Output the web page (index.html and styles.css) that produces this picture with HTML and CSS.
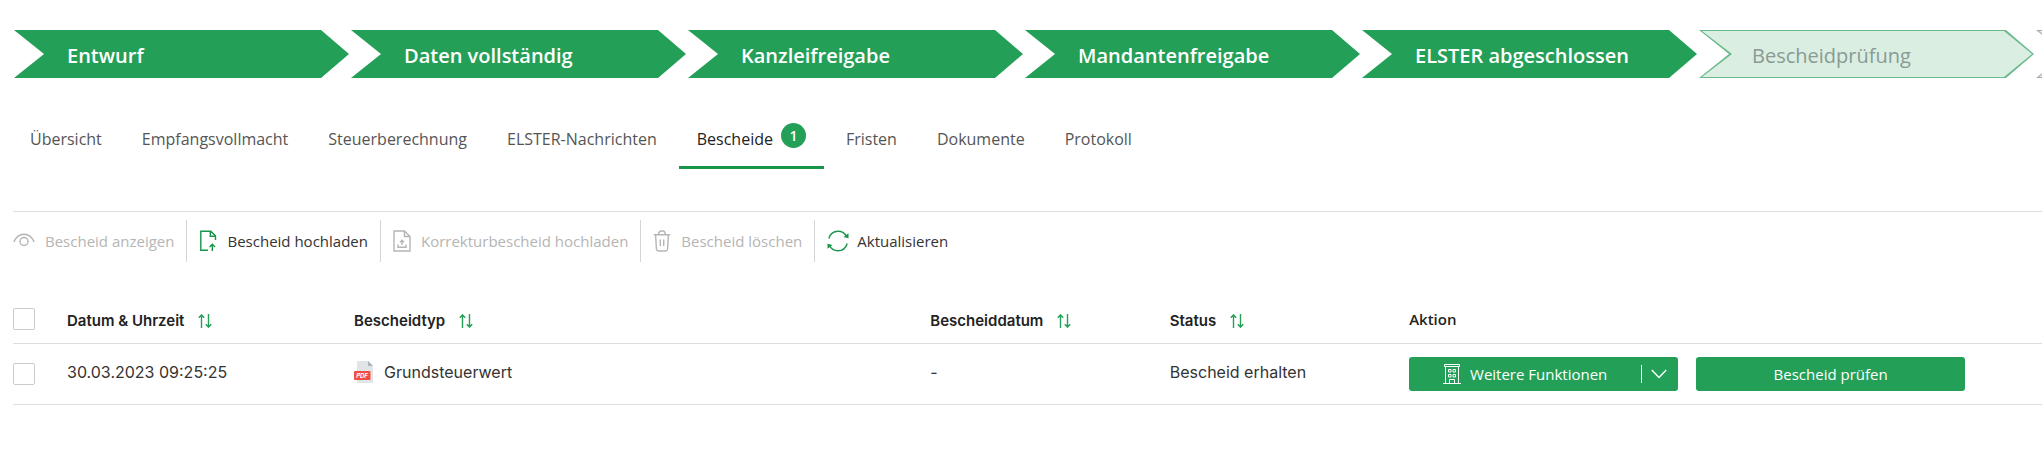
FILE: index.html
```html
<!DOCTYPE html>
<html lang="de">
<head>
  <meta charset="UTF-8" />
  <meta name="viewport" content="width=device-width, initial-scale=1.0"/>
  <title>Bescheide</title>
  <link rel="stylesheet" href="styles.css">
</head>
<body>

  <!-- Icons used more than once -->
  <svg class="icon-defs" aria-hidden="true">
    <symbol id="icon-sort" viewBox="0 0 14 14">
      <path d="M3.5 14V1M.8 3.8l2.7-2.9 2.7 2.9M10.5 0v13M7.8 10.2l2.7 2.9 2.7-2.9" fill="none" stroke="currentColor" stroke-width="1.4"/>
    </symbol>
  </svg>

  <!-- Progress -->
  <ol class="steps">
    <li class="step">Entwurf</li>
    <li class="step">Daten vollständig</li>
    <li class="step">Kanzleifreigabe</li>
    <li class="step">Mandantenfreigabe</li>
    <li class="step">ELSTER abgeschlossen</li>
    <li class="step step-next">Bescheidprüfung</li>
    <li class="step step-open"></li>
  </ol>

  <!-- Tabs -->
  <nav class="tabs">
    <a href="#">Übersicht</a>
    <a href="#">Empfangsvollmacht</a>
    <a href="#">Steuerberechnung</a>
    <a href="#">ELSTER-Nachrichten</a>
    <a href="#" class="active">Bescheide <span class="badge">1</span></a>
    <a href="#">Fristen</a>
    <a href="#">Dokumente</a>
    <a href="#">Protokoll</a>
  </nav>

  <main>
    <!-- Toolbar -->
    <div class="toolbar">
      <button disabled>
        <svg width="22" height="22" viewBox="0 0 22 22"><path d="M.8 12C3 6.800 6.500 4.200 11 4.200S19 6.800 21.200 12"/><circle cx="11" cy="11.500" r="4"/></svg>
        Bescheid anzeigen
      </button>
      <button>
        <svg class="green" width="18" height="22" viewBox="0 0 18 22"><path d="M9 20.200H1.800V1.200h10l4.700 4.600V10M11.300 1.200v5h5.200M13.300 21v-6.500M10.600 17l2.700-2.800L16 17"/></svg>
        Bescheid hochladen
      </button>
      <button disabled>
        <svg width="18" height="22" viewBox="0 0 18 22"><path d="M1 1h10.500L17 6.500V21H1zM11.500 1v5.500H17M9 15v-4.500M7 12.300l2-2 2 2M5 14.500v2.800h8v-2.800"/></svg>
        Korrekturbescheid hochladen
      </button>
      <button disabled>
        <svg width="18" height="22" viewBox="0 0 18 22"><path d="M.8 4.800h16.400M2.600 5l.8 14q.2 2 2 2h7.200q1.800 0 2-2l.8-14M5.500 4.500Q6 1 8 1h2q2 0 2.500 3.500M7.300 9.500v6.500M10.700 9.500v6.500"/></svg>
        Bescheid löschen
      </button>
      <button class="refresh">
        <svg class="green" width="22" height="22" viewBox="0 0 22 22"><path d="M1.800 8.500C3.200 3.800 6.600 1.200 11 1.200c4 0 7 2 8.800 5.500M20.200 13.500c-1.400 4.700-4.800 7.300-9.200 7.300-4 0-7-2-8.800-5.500"/><path class="fill" d="M21.500 3.300v5l-5-1.300zM.5 18.700v-5l5 1.300z"/></svg>
        Aktualisieren
      </button>
    </div>

    <!-- Table -->
    <table>
      <colgroup>
        <col class="col-check">
        <col class="col-date">
        <col class="col-type">
        <col class="col-notice">
        <col class="col-status">
        <col>
      </colgroup>
      <thead>
        <tr>
          <th><input type="checkbox" aria-label="Alle auswählen"></th>
          <th><button class="sort">Datum &amp; Uhrzeit <svg><use href="#icon-sort"/></svg></button></th>
          <th><button class="sort">Bescheidtyp <svg><use href="#icon-sort"/></svg></button></th>
          <th><button class="sort">Bescheiddatum <svg><use href="#icon-sort"/></svg></button></th>
          <th><button class="sort">Status <svg><use href="#icon-sort"/></svg></button></th>
          <th class="action-head">Aktion</th>
        </tr>
      </thead>
      <tbody>
        <tr>
          <td><input type="checkbox" aria-label="Bescheid auswählen"></td>
          <td class="text">30.03.2023 09:25:25</td>
          <td class="text">
            <div class="file">
              <svg width="20" height="22" viewBox="0 0 20 22">
                <path d="M4 0h10l5 5v17H4q-1 0-1-1V1q0-1 1-1z" fill="#e2e5e8"/>
                <path d="M14 0l5 5h-4q-1 0-1-1z" fill="#a9b1ba"/>
                <rect x="0" y="10" width="16.500" height="9" rx="1" fill="#ee4f40"/>
                <text x="8" y="17" text-anchor="middle" class="pdf-label">PDF</text>
              </svg>
              Grundsteuerwert
            </div>
          </td>
          <td class="text">-</td>
          <td class="text">Bescheid erhalten</td>
          <td>
            <div class="actions">
              <button class="btn">
                <span class="btn-main">
                  <svg class="building" width="18" height="20" viewBox="0 0 18 20"><path d="M0 19.500h18M2.500 19V2.500M15.500 19V2.500M1.500 .5h15v2h-15zM5.500 5.500h2.500v2.500H5.500zM10 5.500h2.500v2.500H10zM5.500 10.500h2.500v2.500H5.500zM10 10.500h2.500v2.500H10zM6.500 19v-3.500h5v3.500"/></svg>
                  Weitere Funktionen
                </span>
                <span class="btn-toggle">
                  <svg width="16" height="10" viewBox="0 0 16 10"><path d="M.8 1L8 8.500 15.200 1"/></svg>
                </span>
              </button>
              <button class="btn">Bescheid prüfen</button>
            </div>
          </td>
        </tr>
      </tbody>
    </table>
  </main>

</body>
</html>
```
FILE: styles.css
```css
/* General Styles */
* {
  box-sizing: border-box;
}

body {
  margin: 0;
  font-family: 'Segoe UI', 'Open Sans', sans-serif;
  font-size: 16px;
  background-color: #fff;
  color: #333;
  overflow-x: hidden;
}

button {
  font: inherit;
  color: inherit;
  background: none;
  border: none;
  padding: 0;
  cursor: pointer;
}

svg {
  flex: none;
}

.icon-defs {
  display: none;
}

/* Progress */
.steps {
  display: flex;
  gap: 2px;
  margin: 0;
  padding: 30px 0 0 14px;
  list-style: none;
  overflow: hidden;
}

.step {
  --arrow: polygon(0 0, calc(100% - 28px) 0, 100% 50%, calc(100% - 28px) 100%, 0 100%, 30px 50%);
  flex: 0 0 335px;
  height: 48px;
  padding-left: 53px;
  background-color: #239f57;
  clip-path: var(--arrow);
  color: #fff;
  font-size: 20px;
  font-weight: 600;
  line-height: 52px;
}

.step-next,
.step-open {
  position: relative;
  z-index: 0;
  background-color: #6bb98d;
  color: #8a9a94;
  font-weight: 400;
}

.step-next::before,
.step-open::before {
  content: "";
  position: absolute;
  inset: 1px 2px 1px 3px;
  z-index: -1;
  background-color: #daeee2;
  clip-path: var(--arrow);
}

.step-open {
  background-color: #aaa;
}

.step-open::before {
  background-color: #eee;
}

/* Tabs */
.tabs {
  display: flex;
  gap: 4px;
  padding: 32px 12px 0;
}

.tabs a {
  display: flex;
  gap: 8px;
  height: 59px;
  padding: 0 18px;
  border-bottom: 3px solid transparent;
  color: #555;
  line-height: 58px;
  text-decoration: none;
}

.tabs a.active {
  border-color: #17964a;
  color: #222;
  font-weight: 500;
}

.badge {
  width: 25px;
  height: 25px;
  margin-top: 13px;
  border-radius: 50%;
  background-color: #239f57;
  color: #fff;
  font-size: 14px;
  font-weight: 600;
  line-height: 25px;
  text-align: center;
}

main {
  margin: 42px 0 0 13px;
  border-top: 1px solid #ddd;
}

/* Toolbar */
.toolbar {
  display: flex;
  padding-top: 8px;
  font-size: 15px;
}

.toolbar button {
  display: flex;
  align-items: center;
  gap: 10px;
  height: 42px;
  padding: 0 12px;
  border-right: 1px solid #d5d5d5;
}

.toolbar button:first-child {
  padding-left: 0;
}

.toolbar button:last-child {
  border-right: none;
}

.toolbar .refresh {
  gap: 8px;
}

.toolbar button:disabled {
  color: #b5b5b5;
  cursor: default;
}

.toolbar svg,
.btn svg {
  fill: none;
  stroke: currentColor;
  stroke-width: 1.4;
}

.toolbar .green {
  color: #17964a;
}

.toolbar .fill {
  fill: currentColor;
  stroke: none;
}

/* Table */
table {
  width: 100%;
  margin-top: 33px;
  border-collapse: collapse;
  table-layout: fixed;
  font-family: Inter, sans-serif;
}

.col-check { width: 54px; }
.col-date { width: 14.150%; }
.col-type { width: 28.400%; }
.col-notice,
.col-status { width: 11.800%; }

th,
td {
  padding: 0;
  border-bottom: 1px solid #ddd;
  text-align: left;
  vertical-align: middle;
}

th {
  height: 48px;
  color: #222;
  font-size: 15px;
  font-weight: 600;
}

td {
  height: 61px;
}

td.text {
  padding-bottom: 4px;
}

input[type="checkbox"] {
  appearance: none;
  display: block;
  width: 22px;
  height: 22px;
  margin: 0;
  border: 1px solid #ccc;
  border-radius: 2px;
  background-color: #fff;
}

.sort {
  display: flex;
  align-items: center;
  gap: 14px;
  padding-top: 4px;
}

.sort svg {
  width: 14px;
  height: 14px;
  color: #239f57;
}

.action-head {
  font-family: 'Segoe UI', 'Open Sans', sans-serif;
}

.file {
  display: flex;
  align-items: center;
  gap: 10px;
}

.pdf-label {
  fill: #fff;
  font-size: 6px;
  font-style: italic;
  font-weight: 700;
}

/* Action Buttons */
.actions {
  display: flex;
  gap: 18px;
}

.btn {
  display: flex;
  align-items: center;
  justify-content: center;
  width: 269px;
  height: 34px;
  border-radius: 3px;
  background-color: #239f57;
  color: #fff;
  font-family: 'Segoe UI', 'Open Sans', sans-serif;
  font-size: 15px;
}

.btn-main {
  display: flex;
  flex: 1;
  align-items: center;
  justify-content: center;
  gap: 9px;
}

.btn .building {
  stroke-width: 1;
}

.btn-toggle {
  display: flex;
  align-items: center;
  height: 18px;
  padding: 0 11px 0 9px;
  border-left: 1px solid #fff;
}
```
